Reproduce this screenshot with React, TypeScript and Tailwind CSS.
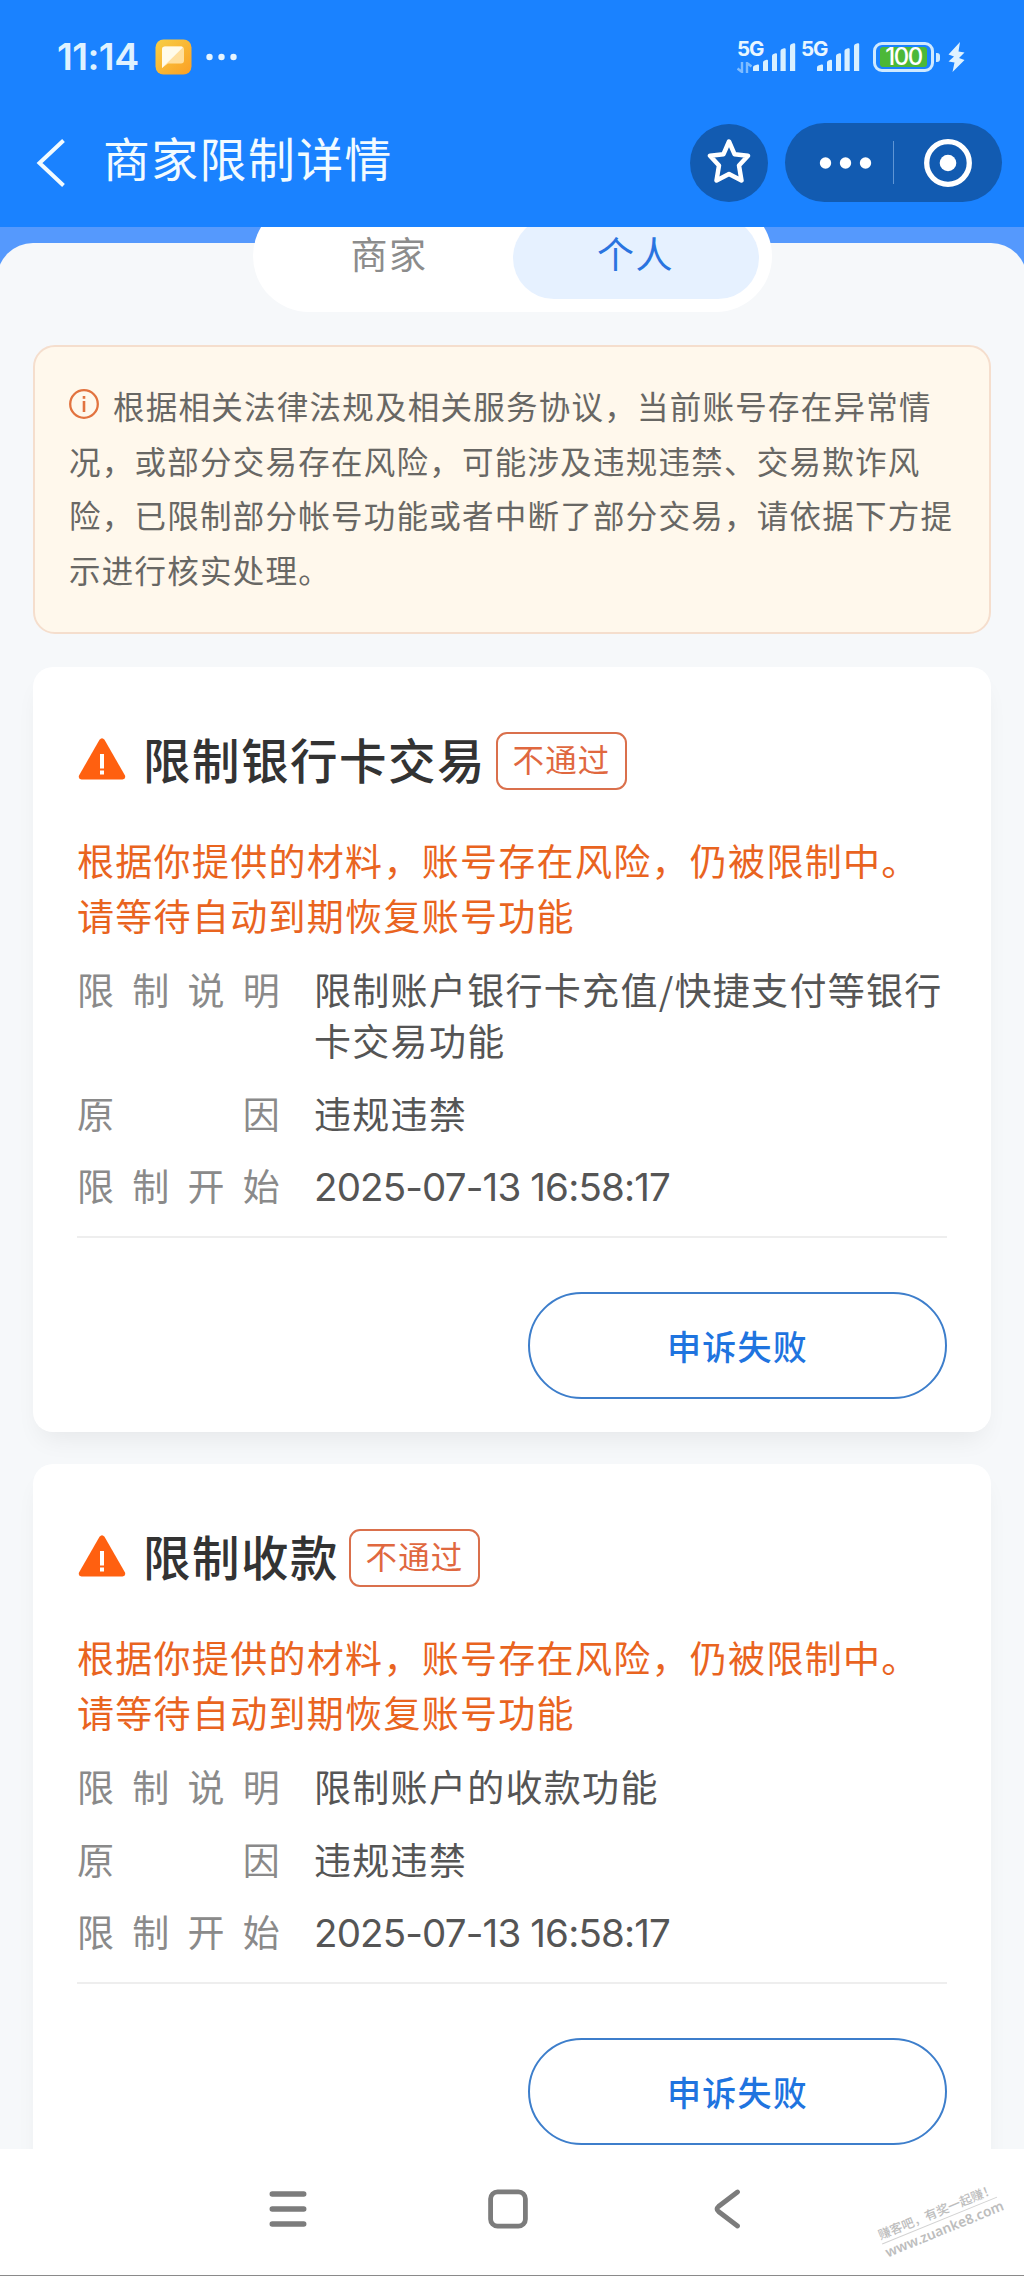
// Merchant restriction detail page - personal account tab
import React from 'react';

interface Restriction {
  title: string;
  status: string;
  notice: string[];
  description: string[];
  reason: string;
  startedAt: string;
  action: string;
}

const RESTRICTIONS: Restriction[] = [
  {
    title: '限制银行卡交易',
    status: '不通过',
    notice: ['根据你提供的材料，账号存在风险，仍被限制中。', '请等待自动到期恢复账号功能'],
    description: ['限制账户银行卡充值/快捷支付等银行', '卡交易功能'],
    reason: '违规违禁',
    startedAt: '2025-07-13 16:58:17',
    action: '申诉失败'
  },
  {
    title: '限制收款',
    status: '不通过',
    notice: ['根据你提供的材料，账号存在风险，仍被限制中。', '请等待自动到期恢复账号功能'],
    description: ['限制账户的收款功能'],
    reason: '违规违禁',
    startedAt: '2025-07-13 16:58:17',
    action: '申诉失败'
  }
];

function SignalBars() {
  return (
    <svg width="44" height="30" viewBox="0 0 44 30" fill="#d9f0ff">
      <path d="M0 29v-3.5q0-1.5 1.5-2l3-1q1.500-.5 1.500 1V29z" />
      <path d="M10 29v-8.500q0-1.500 1.500-2l2-.7q1.500-.5 1.500 1V29z" />
      <path d="M19 29V14q0-1.500 1.500-2l2-.7q1.500-.5 1.500 1V29z" />
      <path d="M27.500 29V9q0-1.500 1.500-2l2-.7q1.700-.5 1.700 1V29z" />
      <path d="M37 29V4q0-1.500 1.500-2l2-.7q1.700-.5 1.700 1V29z" />
    </svg>
  );
}

function StatusBar() {
  return (
    <div className="flex h-[114px] items-center pl-[57px] pr-[59px] font-['Inter',sans-serif] text-[#dff2ff]">
      <span className="w-[82px] whitespace-nowrap text-[37.500px] font-semibold leading-none tracking-[-0.600px]">11:14</span>
      <svg className="ml-4" width="37" height="36" viewBox="0 0 37 36">
        <defs>
          <linearGradient id="note" x1="0" y1="0" x2="1" y2="1">
            <stop offset="0" stopColor="#f7cf45" />
            <stop offset="1" stopColor="#fb9f24" />
          </linearGradient>
        </defs>
        <rect x="0.5" y="0.500" width="36" height="35" rx="8" fill="url(#note)" />
        <path d="M7 10.500q0-3 3-3h16q3 0 3 3v11q0 3-3 3H13L7 29z" fill="#ffdf9d" />
        <path d="M7 10.500q0-3 3-3h16.500q2 0 .8 1.500L7 29z" fill="#fffbea" />
      </svg>
      <svg className="ml-[14px]" width="32" height="8" viewBox="0 0 32 8" fill="#e4f4ff">
        <circle cx="3.500" cy="4" r="3.200" />
        <circle cx="15.500" cy="4" r="3.200" />
        <circle cx="27.500" cy="4" r="3.200" />
      </svg>

      <div className="ml-auto flex items-center">
        <div className="flex h-[32px] w-[16px] flex-col">
          <span className="text-[20.500px] font-bold leading-[15px] tracking-[-1px] text-[#e8f6ff]">5G</span>
          <svg className="mt-[6px] shrink-0" width="15" height="11" viewBox="0 0 15 11" fill="none" stroke="#7fbcff" strokeWidth="2.400">
            <path d="M5 0v10L0.500 6.500M10 11V1l4.500 3.500" />
          </svg>
        </div>
        <SignalBars />
        <div className="ml-[4px] h-[32px] w-[16px]">
          <span className="block text-[20.500px] font-bold leading-[15px] tracking-[-1px] text-[#e8f6ff]">5G</span>
        </div>
        <SignalBars />
        <div className="ml-[12px] flex h-[30px] w-[61px] items-center rounded-[9px] border-[3px] border-[#cfe9ff] px-[4px]">
          <div className="flex h-[20px] flex-1 items-center justify-center rounded-[3px] bg-[#4cb838]">
            <span className="text-[24px] font-medium leading-none tracking-[-1.500px] text-white">100</span>
          </div>
        </div>
        <div className="ml-[2px] h-[9px] w-[4px] rounded-r-[3px] bg-[#cfe9ff]" />
        <svg className="ml-[8px]" width="17" height="30" viewBox="0 0 17 30" fill="#dff2ff">
          <path d="M12 0L0.500 12.500 6 14.500 0.500 19.500 6.500 20.500 4.500 30 16.500 18 11 16 16.500 10.500 10.500 9.500z" />
        </svg>
      </div>
    </div>
  );
}

function TitleBar() {
  return (
    <div className="flex h-[97px] items-center pl-[36px] pr-[22px]">
      <svg width="30" height="50" viewBox="0 0 30 50" fill="none" stroke="#f2fbff" strokeWidth="4">
        <path d="M27.500 2.500L3.500 25l24 22.500" />
      </svg>
      <h1 className="ml-[37px] pb-[12px] text-[46.800px] leading-[60px] tracking-[1.500px] text-[#f2fbff]">商家限制详情</h1>
      <div className="ml-auto flex h-[78px] w-[78px] items-center justify-center rounded-full bg-[#125bb1]">
        <svg className="mb-[3px]" width="44" height="48" viewBox="0 0 44 48" fill="none" stroke="#fff" strokeWidth="4.500" strokeLinejoin="round">
          <path d="M22 4.500L27.500 17.200 41 18.700 32 28.500 34.500 43.500 22 37 9.500 43.500 12 28.500 3 18.700 16.500 17.200z" />
        </svg>
      </div>
      <div className="ml-[17px] flex h-[79px] w-[217px] items-center rounded-full bg-[#125bb1]">
        <svg className="ml-[34px]" width="54" height="12" viewBox="0 0 54 12" fill="#fff">
          <circle cx="6.500" cy="6" r="5.700" />
          <circle cx="26.500" cy="6" r="5.700" />
          <circle cx="46.500" cy="6" r="5.700" />
        </svg>
        <div className="ml-[20px] h-[43px] w-px bg-[#5f95d4]" />
        <svg className="ml-[29px]" width="50" height="50" viewBox="0 0 50 50" fill="none">
          <circle cx="25" cy="25" r="21.300" stroke="#fff" strokeWidth="5.300" />
          <circle cx="25" cy="25" r="8.300" fill="#fff" />
        </svg>
      </div>
    </div>
  );
}

function Tabs() {
  return (
    <div className="mx-auto -mt-[43px] flex h-[112px] w-[519px] items-center rounded-full bg-white px-[13px] text-[37px] leading-none tracking-[1.500px]">
      <div className="flex h-[82px] w-[247px] items-center justify-center pb-[5px] text-[#8c8c8c]">商家</div>
      <div className="mt-[4px] flex h-[82px] w-[246px] items-center justify-center rounded-full bg-[#e6f1ff] pb-[9px] text-[#2a74e0]">
        个人
      </div>
    </div>
  );
}

function TipBox() {
  return (
    <div className="mx-[33px] mt-[33px] h-[289px] rounded-[22px] border-2 border-[#f5decd] bg-[#fff8ec] pl-[34px] pt-[31px] text-[31.500px] leading-[54.600px] tracking-[1.250px] text-[#686764]">
      <div className="flex items-center whitespace-nowrap">
        <svg className="mb-[3px] mr-[14px]" width="30" height="30" viewBox="0 0 30 30" fill="none" stroke="#e2733f">
          <circle cx="15" cy="15" r="13.800" strokeWidth="2.300" />
          <path d="M15 12v11" strokeWidth="2.600" />
          <path d="M15 7v2.800" strokeWidth="2.600" />
        </svg>
        根据相关法律法规及相关服务协议，当前账号存在异常情
      </div>
      <div className="whitespace-nowrap">况，或部分交易存在风险，可能涉及违规违禁、交易欺诈风</div>
      <div className="whitespace-nowrap">险，已限制部分帐号功能或者中断了部分交易，请依据下方提</div>
      <div className="whitespace-nowrap">示进行核实处理。</div>
    </div>
  );
}

function InfoRow({ label, children }: { label: string; children: React.ReactNode }) {
  return (
    <div className="flex leading-[51px]">
      <div className="flex w-[204px] shrink-0 justify-between text-[#8a8a8a]">
        {label.split('').map((char, i) => (
          <span key={i}>{char}</span>
        ))}
      </div>
      <div className="ml-[33px] whitespace-nowrap text-[#555]">{children}</div>
    </div>
  );
}

function RestrictionCard({ item }: { item: Restriction }) {
  return (
    <div className="rounded-[20px] bg-white px-[44px] pb-[33px] pt-[65px] text-[37px] tracking-[1.300px] shadow-[0_14px_26px_-8px_rgba(0,0,0,0.07)]">
      <div className="flex h-[58px] items-center">
        <svg className="mb-[5px] ml-px" width="48" height="42" viewBox="0 0 48 42">
          <path d="M21.500 1.800q2.500-3 5 0L47 37.500q1 3.500-2.500 4h-41Q0 41 1 37.500z" fill="#ff6010" />
          <path d="M24 16v14.500M24 32.500v4" stroke="#fff" strokeWidth="4" />
        </svg>
        <h2 className="ml-[17px] pb-[5px] text-[47.500px] font-medium leading-[53px] tracking-[1.500px] text-[#333]">{item.title}</h2>
        <span className="ml-[10px] flex h-[58px] w-[131px] items-center justify-center rounded-[11px] border-2 border-[#da704c] pb-[5px] text-[31.500px] leading-none tracking-[1.200px] text-[#e0683f]">
          {item.status}
        </span>
      </div>

      <div className="mt-[43px] leading-[54.500px] text-[#e9641f]">
        {item.notice.map(line => (
          <p key={line} className="whitespace-nowrap">{line}</p>
        ))}
      </div>

      <div className="mt-[22px] flex flex-col gap-[21.500px]">
        <InfoRow label="限制说明">
          {item.description.map(line => (
            <p key={line}>{line}</p>
          ))}
        </InfoRow>
        <InfoRow label="原因">{item.reason}</InfoRow>
        <InfoRow label="限制开始">
          <span className="block pt-[3px] font-['Inter',sans-serif] text-[38.500px] leading-[48px] tracking-[-0.850px]">
            {item.startedAt}
          </span>
        </InfoRow>
      </div>

      <div className="mt-[25px] h-[2px] bg-[#eeeeee]" />

      <div className="mt-[54px] flex justify-end">
        <button className="h-[107px] w-[419px] rounded-full border-2 border-[#3d7ecb] text-[34px] font-medium tracking-[1.200px] text-[#1f74df]">
          {item.action}
        </button>
      </div>
    </div>
  );
}

function NavigationBar() {
  return (
    <div className="relative flex h-[127px] items-center border-b border-[#8a8a8a] bg-white pb-[6px]">
      <svg className="ml-[268px]" width="40" height="40" viewBox="0 0 40 40" stroke="#7c7c7c" strokeWidth="5.300" strokeLinecap="round">
        <path d="M4.200 5h31.600M4.200 20h31.600M4.200 35h31.600" />
      </svg>
      <svg className="ml-[180px]" width="40" height="40" viewBox="0 0 40 40" fill="none" stroke="#7c7c7c" strokeWidth="4.800">
        <rect x="2.600" y="2.800" width="34.800" height="34.400" rx="7" />
      </svg>
      <svg className="ml-[185px]" width="30" height="40" viewBox="0 0 30 40" fill="none" stroke="#7c7c7c" strokeWidth="4.800" strokeLinecap="round">
        <path d="M24.500 3L5.500 17.500q-3 2.500 0 5L24.500 37" />
      </svg>

      {/* site watermark laid over the bar */}
      <div className="absolute left-[878px] top-[55px] w-[124px] rotate-[-22.200deg] whitespace-nowrap text-center font-medium text-[#bdbdbd]">
        <div className="h-[17px] border-b border-[#d2d2d2] text-[12.500px] leading-[14px]">赚客吧，有奖一起赚！</div>
        <div className="font-['Noto_Sans',sans-serif] text-[13.800px] font-semibold leading-[18px]">www.zuanke8.com</div>
      </div>
    </div>
  );
}

export default function App() {
  return (
    <div className="flex h-[2276px] w-[1024px] flex-col overflow-hidden bg-white font-['Noto_Sans_CJK_SC',sans-serif]">
      <header className="h-[227px] shrink-0 bg-[#1a82ff]">
        <StatusBar />
        <TitleBar />
      </header>

      <main className="h-[1922px] shrink-0 overflow-hidden bg-[#5599fd] pt-[16px]">
        <div className="-mx-[3px] flow-root rounded-t-[36px] bg-[#f6f8fa] px-[3px]">
          <Tabs />
          <TipBox />
          <div className="mx-[33px] mt-[33px] flex flex-col gap-[32px]">
            {RESTRICTIONS.map(item => (
              <RestrictionCard key={item.title} item={item} />
            ))}
          </div>
        </div>
      </main>

      <NavigationBar />
    </div>
  );
}
